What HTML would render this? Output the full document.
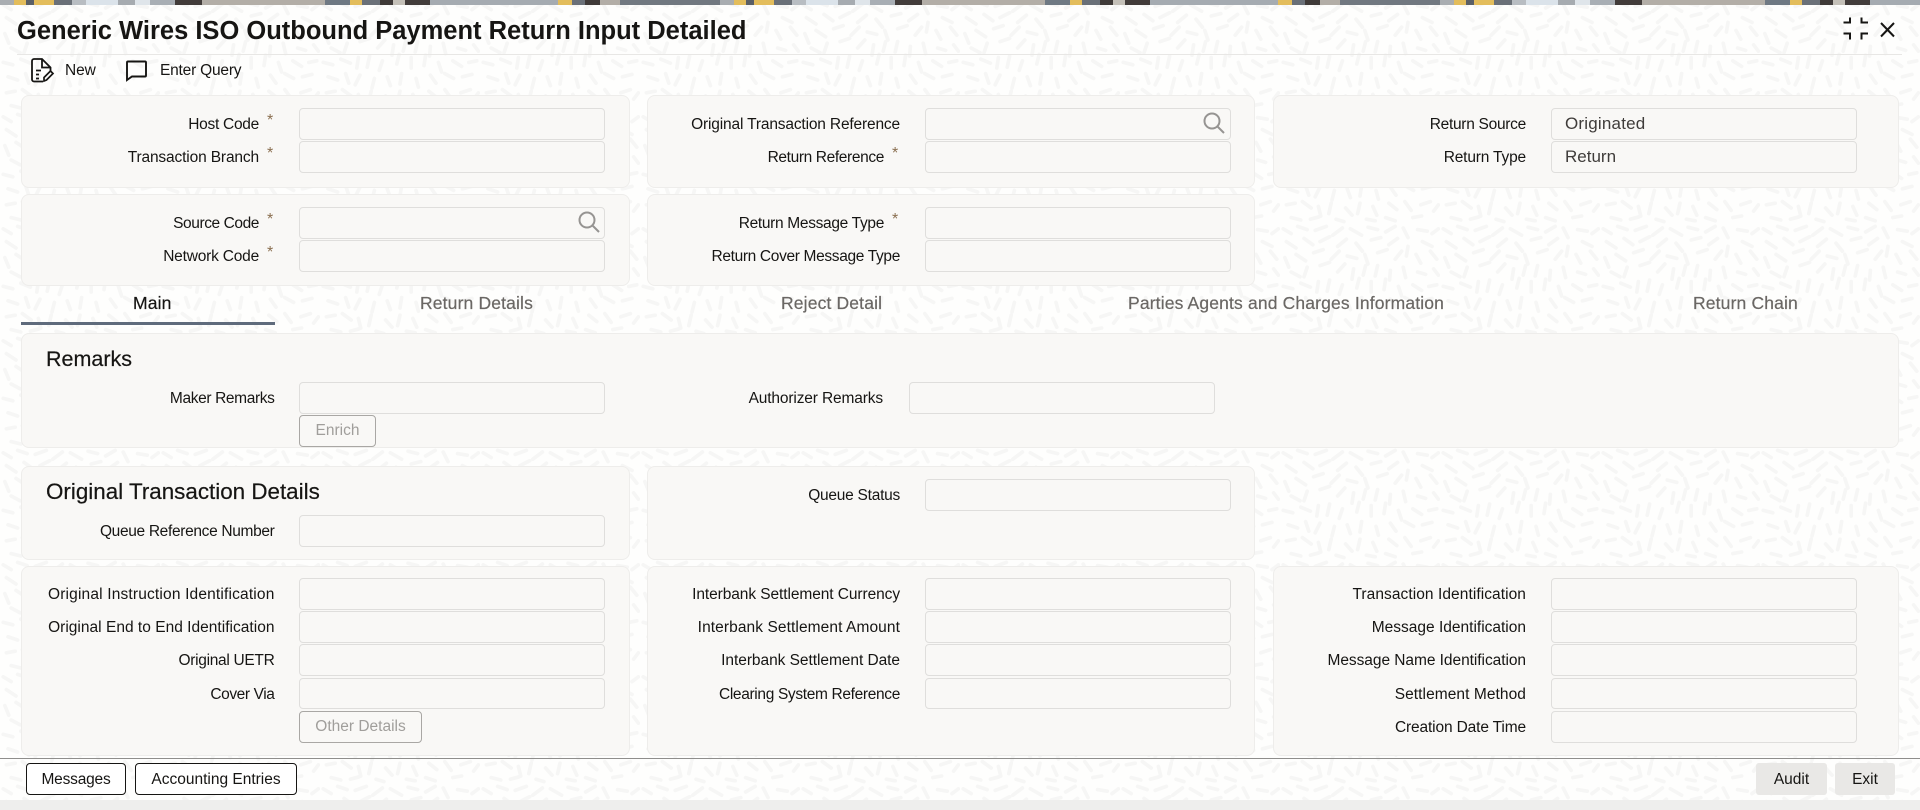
<!DOCTYPE html>
<html lang="en"><head><meta charset="utf-8"><title>Generic Wires ISO Outbound Payment Return Input Detailed</title>
<style>
html,body{margin:0;padding:0;width:1920px;height:810px;overflow:hidden;background:#fefefd}
body{position:relative;font-family:"Liberation Sans",sans-serif;color:#161513;font-size:15.5px}
#bg{position:absolute;left:0;top:0;width:1920px;height:810px}
#banner{position:absolute;left:0;top:0;width:1920px;height:5px;background-size:720px 5px;background-image:linear-gradient(90deg,#a9adb1 0 14px,#e3bd5c 14px 26px,#5a5f66 26px 34px,#e3bd5c 34px 54px,#6a7078 54px 72px,#b8bdc2 72px 86px,#dbe3ea 86px 118px,#a6abb0 118px 135px,#dfe5ea 135px 150px,#a8aeb4 150px 175px,#423c3a 175px 202px,#b3aea7 202px 325px,#6f7983 325px 350px,#e3bd5c 350px 362px,#6a7078 362px 380px,#3f3a38 380px 393px,#c4c0b8 393px 405px,#423c3a 405px 430px,#a5abb1 430px 558px,#e3bd5c 558px 572px,#6a7078 572px 585px,#3f3a38 585px 600px,#b3aea7 600px 620px,#717880 620px 720px)}
h1{position:absolute;left:17px;top:12px;margin:0;font-size:25.5px;line-height:38px;font-weight:700;white-space:nowrap;transform-origin:left center}
.hr{position:absolute;left:17px;width:1885px;top:54px;height:1px;background:#e8e7e5}
.tb{position:absolute;top:60px;line-height:22px;white-space:nowrap}
.p{position:absolute;box-sizing:border-box;background:#f9f8f6;border:1px solid #eeedeb;border-radius:8px}
.i{position:absolute;box-sizing:border-box;background:#f9f8f6;border:1px solid #dfdedc;border-radius:4px;height:32px;padding-left:13px;font-size:17px;line-height:30px;color:#3f3c3a}
.w1{left:299px;width:306px}.w2{left:925px;width:306px}.w3{left:1551px;width:306px}
.l{position:absolute;white-space:nowrap;height:32px;line-height:34px}
.a1{right:1661px}.n1{right:1645.5px}.a2{right:1036px}.n2{right:1020px}.n3{right:394px}
.s{position:absolute;font-size:16px;line-height:16px;color:#8a6f50}
.t{position:absolute;top:290.5px;line-height:24px;font-size:17.5px;letter-spacing:.15px;color:#6a6764;white-space:nowrap;-webkit-text-stroke:.2px currentColor}
.h{position:absolute;left:46px;margin:0;font-weight:400;white-space:nowrap;font-size:21.5px;line-height:28px;-webkit-text-stroke:.2px currentColor}
.bd{position:absolute;box-sizing:border-box;height:32px;left:299px;padding:0;background:#f9f8f6;border:1px solid #a9a7a4;border-radius:4px;color:#a09e9b;font:15.5px/30px "Liberation Sans",sans-serif;text-align:center}
.bf{position:absolute;box-sizing:border-box;height:32px;top:763px;padding:1px 0 0;background:#fff;border:1px solid #161513;border-radius:4px;color:#161513;font:15.5px/30px "Liberation Sans",sans-serif;text-align:center}
.bg2{background:#e9e8e6;border:0;border-radius:3px}
svg.ic{position:absolute;overflow:visible}
</style></head><body>
<svg id="bg" width="1920" height="810"><defs><pattern id="pt" width="200" height="140" patternUnits="userSpaceOnUse" patternTransform="scale(.8)"><path fill="none" stroke="#f6f6f5" stroke-width="4.600" stroke-linecap="round" d="M4 6l10 6M22 3l12 4M44 8l14-5M66 14l12-9M88 6l14 8M110 4l12 3M132 10l12-7M154 5l6 12M172 7l12 2M190 12l8-6M8 22l12 8M30 18l11 8M50 22l12-6M72 28l11-9M95 24l8 10M114 20l12-3M136 26l11-8M160 28l-2 12M178 22l12 6M6 42l5 12M20 38l12 8M42 36l12-4M64 44l10-10M84 40l12 3M106 38l4 12M122 36l12-4M144 44l8-10M170 38l6 11M188 34l8 10M14 60l11 6M34 54l-4 12M50 52l12-4M72 60l9-10M92 56l-2 13M104 64l3-12M122 52l-3 13M138 58l-1 12M154 54l3 13M172 60l10 3M192 56l6 8M4 78l12 3M26 74l12 5M48 72l-2 13M62 70l-3 14M78 76l-4 12M96 80l3-12M114 72l0 13M130 82l2-13M148 78l4 12M166 76l11 7M186 78l10-2M10 96l12 4M32 92l4 12M50 94l-6 12M68 98l-3 12M84 96l4 11M102 92l-2 13M120 98l3 11M138 94l7 10M156 92l11 6M178 96l12-3M8 116l11-2M28 112l11 8M48 118l3 12M64 114l-3 13M82 120l8 9M100 114l-3 13M116 118l5 11M136 114l10 8M156 112l8 11M176 116l12-4M192 124l6-8M14 132l12 3M38 134l11-3M70 134l10 3M108 134l11 2M132 132l12 4M166 132l11-2"/></pattern></defs><rect width="1920" height="810" fill="url(#pt)"/></svg>
<div id="banner"></div>
<h1>Generic Wires ISO Outbound Payment Return Input Detailed</h1>
<div class="hr"></div>

<svg class="ic" style="left:0;top:0" width="260" height="90" fill="none" stroke="#161513" stroke-width="1.8">
<path d="M43 81.500H34a2 2 0 0 1-2-2V61a2 2 0 0 1 2-2h8l8.500 8.500V71"/><path d="M42 59v8.500h8.500"/><path d="M36 70.500h5M36 74.500h3M36 78.500h3"/><path d="M44 81v-3.500l6.500-6.500 2.500 2.500-6.500 6.500z" stroke-width="1.700"/>
<path d="M127 62.500a1 1 0 0 1 1-1h17a1 1 0 0 1 1 1v13a1 1 0 0 1-1 1h-13l-5 3.500z" stroke-width="1.900"/></svg>
<div class="tb" style="left:65px;letter-spacing:-.1px">New</div>
<div class="tb" style="left:160px;letter-spacing:-.2px">Enter Query</div>
<svg class="ic" style="left:0;top:0" width="1920" height="50" fill="none" stroke="#161513" stroke-width="2">
<path d="M1843.500 22.500h6.500v-5M1861.500 17.500v5h6.500M1843.500 33.500h6.500v6M1861.500 39.500v-6h6.500"/><path d="M1881 23l13 13.500M1894 23l-13 13.500"/></svg>

<!-- top panels -->
<div class="p" style="left:21px;top:95px;width:609px;height:93px"></div>
<div class="p" style="left:647px;top:95px;width:608px;height:93px"></div>
<div class="p" style="left:1273px;top:95px;width:626px;height:93px"></div>
<div class="p" style="left:21px;top:194px;width:609px;height:92px"></div>
<div class="p" style="left:647px;top:194px;width:608px;height:92px"></div>

<label class="l a1" style="top:108px;letter-spacing:-.27px">Host Code</label><span class="s" style="left:267px;top:113px">*</span><div class="i w1" style="top:108px"></div>
<label class="l a1" style="top:141px;letter-spacing:-.14px">Transaction Branch</label><span class="s" style="left:267px;top:146px">*</span><div class="i w1" style="top:141px"></div>
<label class="l a1" style="top:207px;letter-spacing:-.42px">Source Code</label><span class="s" style="left:267px;top:212px">*</span><div class="i w1" style="top:207px"></div>
<label class="l a1" style="top:240px;letter-spacing:-.2px">Network Code</label><span class="s" style="left:267px;top:245px">*</span><div class="i w1" style="top:240px"></div>

<label class="l n2" style="top:108px;letter-spacing:-.16px">Original Transaction Reference</label><div class="i w2" style="top:108px"></div>
<label class="l a2" style="top:141px;letter-spacing:-.37px">Return Reference</label><span class="s" style="left:892px;top:146px">*</span><div class="i w2" style="top:141px"></div>
<label class="l a2" style="top:207px;letter-spacing:-.32px">Return Message Type</label><span class="s" style="left:892px;top:212px">*</span><div class="i w2" style="top:207px"></div>
<label class="l n2" style="top:240px;letter-spacing:-.34px">Return Cover Message Type</label><div class="i w2" style="top:240px"></div>

<label class="l n3" style="top:108px;letter-spacing:-.28px">Return Source</label><div class="i w3" style="top:108px;letter-spacing:.2px">Originated</div>
<label class="l n3" style="top:141px;letter-spacing:-.17px">Return Type</label><div class="i w3" style="top:141px">Return</div>

<svg class="ic" style="left:0;top:0" width="1300" height="240" fill="none" stroke="#969492" stroke-width="2"><circle cx="1212" cy="121" r="7.500"/><path d="M1217.500 126.500l6.500 6.500"/><circle cx="587" cy="220" r="7.500"/><path d="M592.500 225.500l6.500 6.500"/></svg>

<!-- tabs -->
<div class="t" style="left:133px;color:#161513">Main</div>
<div class="t" style="left:420px">Return Details</div>
<div class="t" style="left:781px">Reject Detail</div>
<div class="t" style="left:1128px">Parties Agents and Charges Information</div>
<div class="t" style="left:1693px">Return Chain</div>
<div style="position:absolute;left:21px;top:322px;width:254px;height:3px;background:#5f6b7c"></div>

<!-- remarks -->
<div class="p" style="left:21px;top:333px;width:1878px;height:115px"></div>
<h2 class="h" style="top:344.500px">Remarks</h2>
<label class="l n1" style="top:381.500px;letter-spacing:-.37px">Maker Remarks</label><div class="i w1" style="top:382px"></div>
<label class="l" style="top:381.500px;right:1037px;letter-spacing:-.14px">Authorizer Remarks</label><div class="i" style="left:909px;width:306px;top:382px"></div>
<button class="bd" style="top:415px;width:77px">Enrich</button>

<!-- original -->
<div class="p" style="left:21px;top:466px;width:609px;height:94px"></div>
<div class="p" style="left:647px;top:466px;width:608px;height:94px"></div>
<h2 class="h" style="top:478px;font-size:22.4px">Original Transaction Details</h2>
<label class="l n1" style="top:515px;letter-spacing:-.33px">Queue Reference Number</label><div class="i w1" style="top:515px"></div>
<label class="l n2" style="top:479px;letter-spacing:-.25px">Queue Status</label><div class="i w2" style="top:479px"></div>

<!-- lower -->
<div class="p" style="left:21px;top:566px;width:609px;height:190px"></div>
<div class="p" style="left:647px;top:566px;width:608px;height:190px"></div>
<div class="p" style="left:1273px;top:566px;width:626px;height:190px"></div>

<label class="l n1" style="top:578px;letter-spacing:.17px">Original Instruction Identification</label><div class="i w1" style="top:578px"></div>
<label class="l n1" style="top:611px;letter-spacing:.02px">Original End to End Identification</label><div class="i w1" style="top:611px"></div>
<label class="l n1" style="top:644px;letter-spacing:-.3px">Original UETR</label><div class="i w1" style="top:644px"></div>
<label class="l n1" style="top:678px;letter-spacing:-.4px">Cover Via</label><div class="i w1" style="top:678px;height:31px"></div>
<button class="bd" style="top:711px;width:123px">Other Details</button>

<label class="l n2" style="top:578px;letter-spacing:-.08px">Interbank Settlement Currency</label><div class="i w2" style="top:578px"></div>
<label class="l n2" style="top:611px;letter-spacing:.09px">Interbank Settlement Amount</label><div class="i w2" style="top:611px"></div>
<label class="l n2" style="top:644px;letter-spacing:-.05px">Interbank Settlement Date</label><div class="i w2" style="top:644px"></div>
<label class="l n2" style="top:678px;letter-spacing:-.34px">Clearing System Reference</label><div class="i w2" style="top:678px;height:31px"></div>

<label class="l n3" style="top:578px;letter-spacing:.07px">Transaction Identification</label><div class="i w3" style="top:578px"></div>
<label class="l n3" style="top:611px">Message Identification</label><div class="i w3" style="top:611px"></div>
<label class="l n3" style="top:644px;letter-spacing:-.05px">Message Name Identification</label><div class="i w3" style="top:644px"></div>
<label class="l n3" style="top:678px;letter-spacing:.07px">Settlement Method</label><div class="i w3" style="top:678px;height:31px"></div>
<label class="l n3" style="top:711px;letter-spacing:-.14px">Creation Date Time</label><div class="i w3" style="top:711px"></div>

<!-- footer -->
<div style="position:absolute;left:0;top:758px;width:1920px;height:1px;background:#8f8e8c"></div>
<button class="bf" style="left:26px;width:100px;letter-spacing:-.2px">Messages</button>
<button class="bf" style="left:135px;width:162px">Accounting Entries</button>
<button class="bf bg2" style="left:1756px;width:71px">Audit</button>
<button class="bf bg2" style="left:1835px;width:60px">Exit</button>
<div style="position:absolute;left:0;top:800px;width:1920px;height:10px;background:#eeeeed"></div>
</body></html>
